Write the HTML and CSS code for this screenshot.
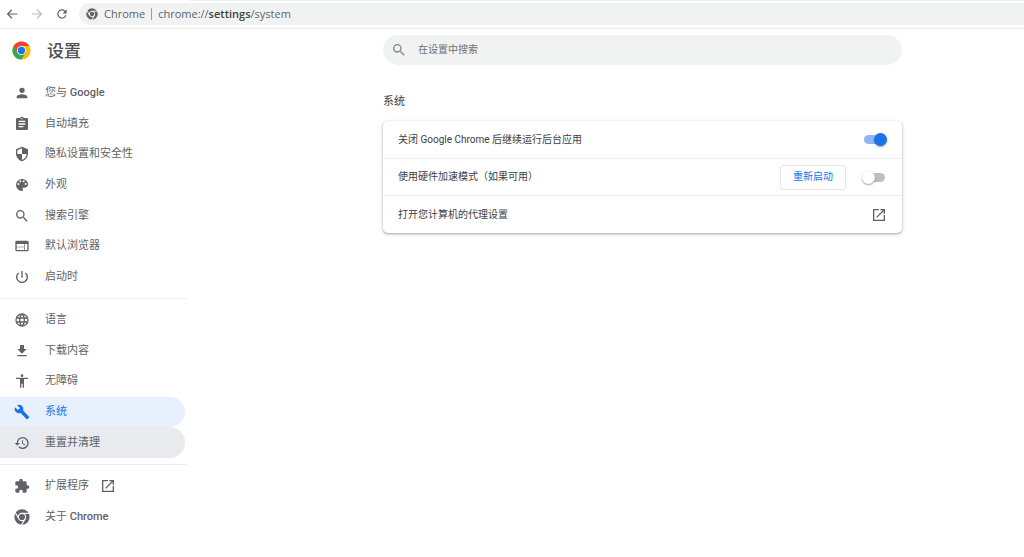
FILE: index.html
```
<!DOCTYPE html>
<html lang="zh-CN">
<head>
<meta charset="utf-8">
<title>设置 - 系统</title>
<link rel="stylesheet" href="styles.css">
</head>
<body>
<svg class="defs" width="0" height="0" aria-hidden="true">
  <symbol id="search" viewBox="0 0 24 24"><path d="M15.5 14h-.79l-.28-.27A6.47 6.47 0 0 0 16 9.5 6.5 6.5 0 1 0 9.5 16c1.61 0 3.09-.59 4.23-1.57l.27.28v.79l5 4.99L20.49 19zm-6 0a4.5 4.5 0 1 1 0-9 4.5 4.5 0 0 1 0 9z"/></symbol>
  <symbol id="launch" viewBox="0 0 24 24"><path d="M19 19H5V5h7V3H3v18h18v-9h-2zM14 3v2h3.59l-9.83 9.83 1.41 1.41L19 6.41V10h2V3z"/></symbol>
  <symbol id="chromium" viewBox="1 1 22 22"><circle cx="12" cy="12" r="10.500"/><g fill="none" stroke="#fff" stroke-width="1.500"><circle cx="12" cy="12" r="5"/><path id="blade" d="M12 7h10"/><path d="M12 7h10" transform="rotate(120 12 12)"/><path d="M12 7h10" transform="rotate(240 12 12)"/></g></symbol>
</svg>

<header class="toolbar">
  <button class="tool" aria-label="后退"><svg viewBox="0 0 24 24"><path d="M21 11H6.800l5.600-5.600L11 4l-8 8 8 8 1.400-1.400L6.800 13H21z"/></svg></button>
  <button class="tool tool-off" aria-label="前进" disabled><svg viewBox="0 0 24 24"><path d="M3 11h14.200l-5.600-5.600L13 4l8 8-8 8-1.400-1.400 5.600-5.600H3z"/></svg></button>
  <button class="tool" aria-label="重新加载"><svg viewBox="0 0 24 24"><path d="M17.650 6.350A8 8 0 1 0 19.730 14h-2.080A6 6 0 1 1 12 6c1.660 0 3.140.690 4.220 1.780L13 11h7V4z"/></svg></button>
  <div class="omnibox">
    <svg class="site-icon"><use href="#chromium"/></svg>
    <span class="site-name">Chrome</span>
    <span class="url">chrome://<b>settings</b>/system</span>
  </div>
</header>

<div class="page">
  <aside class="sidebar">
    <div class="brand">
      <svg class="logo" viewBox="1 1 46 46"><circle cx="24" cy="24" r="22" fill="#fbbc04"/><path d="M24 24 13.500 30 4.900 13A22 22 0 0 1 43.100 13H24z" fill="#ea4335"/><path d="M4.900 13A22 22 0 0 0 24 46l9.500-16.500L24 24l-9.500 5.500z" fill="#34a853"/><circle cx="24" cy="24" r="11" fill="#fff"/><circle cx="24" cy="24" r="8.800" fill="#1a73e8"/></svg>
      <h1>设置</h1>
    </div>
    <nav class="menu">
      <div class="group group-main">
        <a class="item" href="#people"><svg viewBox="0 0 24 24"><path d="M12 12a4 4 0 1 0 0-8 4 4 0 0 0 0 8zm0 2c-2.670 0-8 1.340-8 4v2h16v-2c0-2.660-5.330-4-8-4z"/></svg><span>您与 <span class="latin">Google</span></span></a>
        <a class="item" href="#autofill"><svg viewBox="0 0 24 24"><path d="M19 3h-4.180a3 3 0 0 0-5.640 0H5a2 2 0 0 0-2 2v14c0 1.100.9 2 2 2h14a2 2 0 0 0 2-2V5a2 2 0 0 0-2-2zm-7 0a1 1 0 1 1 0 2 1 1 0 0 1 0-2zm2 14H7v-2h7zm3-4H7v-2h10zm0-4H7V7h10z"/></svg>自动填充</a>
        <a class="item" href="#privacy"><svg viewBox="0 0 24 24"><path d="M12 1 3 5v6c0 5.550 3.840 10.740 9 12 5.160-1.260 9-6.450 9-12V5zm0 10.990h7c-.53 4.120-3.280 7.790-7 8.940V12H5V6.300l7-3.110z"/></svg>隐私设置和安全性</a>
        <a class="item" href="#appearance"><svg viewBox="0 0 24 24"><path d="M12 3a9 9 0 0 0 0 18c.83 0 1.500-.67 1.500-1.500 0-.39-.15-.74-.39-1.010-.23-.26-.38-.61-.38-.99 0-.83.67-1.500 1.500-1.500H16a5 5 0 0 0 5-5c0-4.420-4.030-8-9-8zm-5.500 9a1.500 1.500 0 1 1 0-3 1.500 1.500 0 0 1 0 3zm3-4a1.500 1.500 0 1 1 0-3 1.500 1.500 0 0 1 0 3zm5 0a1.500 1.500 0 1 1 0-3 1.500 1.500 0 0 1 0 3zm3 4a1.500 1.500 0 1 1 0-3 1.500 1.500 0 0 1 0 3z"/></svg>外观</a>
        <a class="item" href="#search-engine"><svg><use href="#search"/></svg>搜索引擎</a>
        <a class="item" href="#browser"><svg viewBox="0 0 24 24"><path d="M20 4H4a2 2 0 0 0-2 2v12c0 1.100.9 2 2 2h16a2 2 0 0 0 2-2V6a2 2 0 0 0-2-2zm-5 14H4v-4h11zm0-5H4V9h11zm5 5h-4V9h4z"/></svg>默认浏览器</a>
        <a class="item" href="#startup"><svg viewBox="0 0 24 24"><path d="M13 3h-2v10h2zm4.830 2.170-1.420 1.420A6.920 6.920 0 0 1 19 12a7 7 0 1 1-11.420-5.420L6.170 5.170A9 9 0 1 0 21 12a8.930 8.930 0 0 0-3.170-6.830z"/></svg>启动时</a>
      </div>
      <hr>
      <div class="group group-advanced">
        <a class="item" href="#languages"><svg viewBox="0 0 24 24"><path d="M11.990 2a10 10 0 1 0 .02 20 10 10 0 0 0-.02-20zm6.930 6h-2.950a15.650 15.650 0 0 0-1.380-3.560A8.030 8.030 0 0 1 18.920 8zM12 4.040c.83 1.200 1.480 2.530 1.910 3.960h-3.820c.43-1.430 1.080-2.760 1.910-3.960zM4.260 14a8.240 8.240 0 0 1 0-4h3.380a16.500 16.500 0 0 0 0 4zm.82 2h2.950c.32 1.250.78 2.450 1.380 3.560A7.990 7.990 0 0 1 5.080 16zm2.950-8H5.080a7.990 7.990 0 0 1 4.330-3.560A15.650 15.650 0 0 0 8.030 8zM12 19.960A14.100 14.100 0 0 1 10.090 16h3.820A14.100 14.100 0 0 1 12 19.960zM14.340 14H9.660a14.700 14.700 0 0 1 0-4h4.680a14.600 14.600 0 0 1 0 4zm.25 5.560c.6-1.110 1.060-2.310 1.380-3.560h2.950a8.030 8.030 0 0 1-4.330 3.560zM16.360 14a16.500 16.500 0 0 0 0-4h3.380a8.240 8.240 0 0 1 0 4z"/></svg>语言</a>
        <a class="item" href="#downloads"><svg viewBox="0 0 24 24"><path d="M19 9h-4V3H9v6H5l7 7zM5 18v2h14v-2z"/></svg>下载内容</a>
        <a class="item" href="#accessibility"><svg viewBox="0 0 24 24"><path d="M12 2a2 2 0 1 1 0 4 2 2 0 0 1 0-4zm9 7h-6v13h-2v-6h-2v6H9V9H3V7h18z"/></svg>无障碍</a>
        <a class="item selected" href="#system" aria-current="page"><svg viewBox="0 0 24 24"><path d="m22.700 19-9.100-9.100c.9-2.300.4-5-1.500-6.900-2-2-5-2.400-7.400-1.300L9 6 6 9 1.600 4.700C.4 7.100.9 10.100 2.900 12.100c1.900 1.900 4.600 2.400 6.900 1.500l9.100 9.100c.4.4 1 .4 1.400 0l2.300-2.300c.5-.4.5-1.100.1-1.400z"/></svg>系统</a>
        <a class="item hovered" href="#reset"><svg viewBox="0 0 24 24"><path d="M13 3a9 9 0 0 0-9 9H1l3.890 3.890.07.14L9 12H6a7 7 0 1 1 2.060 4.940l-1.420 1.420A9 9 0 1 0 13 3zm-1 5v5l4.280 2.540.72-1.210-3.500-2.080V8z"/></svg>重置并清理</a>
      </div>
      <hr>
      <div class="group group-more">
        <a class="item" href="#extensions"><svg viewBox="0 0 24 24"><path d="M20.500 11H19V7a2 2 0 0 0-2-2h-4V3.500a2.500 2.500 0 0 0-5 0V5H4a2 2 0 0 0-2 2v3.800h1.500a2.700 2.700 0 0 1 0 5.400H2V20c0 1.100.9 2 2 2h3.800v-1.500a2.700 2.700 0 0 1 5.400 0V22H17a2 2 0 0 0 2-2v-4h1.500a2.500 2.500 0 0 0 0-5z"/></svg>扩展程序<svg><use href="#launch"/></svg></a>
        <a class="item" href="#about"><svg><use href="#chromium"/></svg><span>关于 <span class="latin">Chrome</span></span></a>
      </div>
    </nav>
  </aside>

  <main class="content">
    <label class="search"><svg><use href="#search"/></svg><input type="text" placeholder="在设置中搜索" aria-label="在设置中搜索"></label>
    <h2>系统</h2>
    <section class="card">
      <div class="row">
        <label for="background">关闭 Google Chrome 后继续运行后台应用</label>
        <input class="toggle" id="background" type="checkbox" checked>
      </div>
      <div class="row">
        <label for="hardware">使用硬件加速模式（如果可用）</label>
        <button class="restart">重新启动</button>
        <input class="toggle" id="hardware" type="checkbox">
      </div>
      <a class="row" href="#proxy"><span>打开您计算机的代理设置</span><svg><use href="#launch"/></svg></a>
    </section>
  </main>
</div>
</body>
</html>
```
FILE: styles.css
```
* { box-sizing: border-box; }
body {
  margin: 0;
  background: #fff;
  color: #3c4043;
  font: 11px/16px Roboto, "Noto Sans CJK SC", sans-serif;
}
svg { display: block; flex: none; fill: currentColor; }
.defs { position: absolute; }
button, input { font: inherit; }
a { color: inherit; text-decoration: none; }

.toolbar {
  position: relative;
  display: flex;
  align-items: center;
  height: 29px;
  padding-left: 5px;
  border-bottom: 1px solid #e8eaed;
}
/* lower edge of the tab strip, right of the active tab */
.toolbar::before {
  content: "";
  position: absolute;
  top: 0;
  right: 0;
  left: 190px;
  height: 1px;
  background: #eeefef;
}
.tool {
  display: flex;
  margin-right: 11px;
  padding: 0;
  border: 0;
  background: none;
  color: #5f6368;
}
.tool svg { width: 14px; height: 14px; }
.tool-off { color: #babcbe; }
.omnibox {
  display: flex;
  flex: 1;
  align-items: center;
  height: 22px;
  margin-left: -1px;
  padding-left: 7px;
  border-radius: 11px 0 0 11px;
  background: #f1f3f3;
  color: #5f6368;
  font-family: "Open Sans", sans-serif;
}
.site-icon { width: 12px; height: 12px; margin-right: 6px; }
.site-name { padding-right: 6px; border-right: 1px solid #9aa0a6; line-height: 12px; }
.url { padding-left: 6px; }
.url b { color: #3c4043; font-weight: 600; }

.page { display: flex; }
.sidebar { flex: 0 0 187px; color: #5f6368; }
.brand {
  display: flex;
  align-items: center;
  gap: 16px;
  height: 43px;
  padding-left: 12px;
}
.logo { width: 19px; height: 19px; }
h1 { margin: 0; color: #4c4f53; font-size: 17px; font-weight: 500; line-height: 24px; }
.menu { padding-top: 6px; }
.group { display: flex; flex-direction: column; }
.group-main { min-height: 214px; }
.group-advanced { min-height: 153px; }
.group-more { min-height: 61px; }
.item {
  display: flex;
  flex: 1;
  align-items: center;
  gap: 15px;
  margin-right: 2px;
  padding-left: 14px;
  border-radius: 0 16px 16px 0;
}
.item > svg { width: 16px; height: 16px; }
.item > svg + svg { margin-left: -4px; }
.latin { font-weight: 500; }
.selected { background: #e8f0fe; color: #1a73e8; }
.hovered { background: #e8eaed; }
hr { height: 1px; margin: 6px 0; border: 0; background: #eceeef; }

.content { flex: 1; padding: 6px 122px 24px 196px; }
.search {
  display: flex;
  align-items: center;
  gap: 11px;
  height: 30px;
  padding: 0 8px;
  border-radius: 15px;
  background: #f1f3f3;
  color: #80868b;
}
.search svg { width: 16px; height: 16px; }
.search input {
  flex: 1;
  min-width: 0;
  padding: 0;
  border: 0;
  outline: 0;
  background: none;
  font-size: 10px;
}
.search input::placeholder { color: #6b6f73; opacity: 1; }
h2 { margin: 29px 0 11px; font-size: 11px; font-weight: 400; line-height: 16px; }
.card {
  border-radius: 5px;
  font-size: 10px;
  box-shadow: 0 1px 2px rgba(60, 64, 67, .3), 0 1px 3px 1px rgba(60, 64, 67, .15);
}
.row {
  display: flex;
  align-items: center;
  gap: 16px;
  min-height: 37px;
  padding: 0 15px;
}
.row + .row { border-top: 1px solid #eceeef; }
.row:last-child { min-height: 38px; }
.row > :first-child { flex: 1; }
.row svg { width: 16px; height: 16px; color: #5f6368; }
.restart {
  height: 25px;
  padding: 0 12px;
  border: 1px solid #e3e5e8;
  border-radius: 3px;
  background: #fff;
  color: #1a73e8;
}
.toggle {
  position: relative;
  display: flex;
  flex: none;
  align-items: center;
  width: 25px;
  height: 13px;
  margin: 0;
  appearance: none;
}
.toggle::before {
  content: "";
  flex: 1;
  height: 9px;
  margin: 0 2px;
  border-radius: 5px;
  background: #bdc1c6;
}
.toggle::after {
  content: "";
  position: absolute;
  top: 0;
  left: 0;
  width: 13px;
  height: 13px;
  border-radius: 50%;
  background: #fff;
  box-shadow: 0 1px 2px rgba(0, 0, 0, .4);
}
.toggle:checked::before { background: #8db8f4; }
.toggle:checked::after { left: 12px; background: #1a73e8; }
```
